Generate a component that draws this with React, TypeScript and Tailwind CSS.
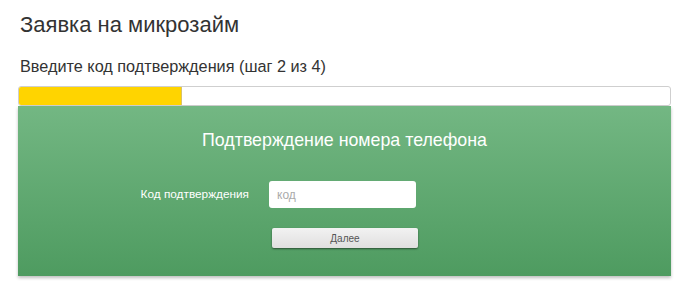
export default function App() {
  return (
    <div className="w-[700px] h-[296px] bg-white font-['Liberation_Sans',Arial,sans-serif] text-[#222]">
      <div className="pl-[18px] pt-[10px] w-[671px]">
        <h1 className="pl-[2px] text-[22px] leading-[30px] text-[#333]">Заявка на микрозайм</h1>
        <p className="pl-[2px] mt-[16px] text-[16.25px] leading-[20px] text-[#333]">
          Введите код подтверждения (шаг 2 из 4)
        </p>
        <div className="mt-[10px] h-[20px] rounded-[3px] border border-[#cfcfcf] bg-white overflow-hidden">
          <div className="h-full w-[163px] bg-[#ffd400] border-r border-[#d9c36a]" />
        </div>
        <div className="h-[170px] bg-gradient-to-b from-[#73b783] to-[#4e9b60] shadow-[0_2px_3px_rgba(0,0,0,0.25)] flex flex-col items-center">
          <h2 className="mt-[22px] text-[17.8px] leading-[24px] text-white">
            Подтверждение номера телефона
          </h2>
          <div className="mt-[29px] flex items-center w-full">
            <label className="w-[231px] text-right text-[11.8px] text-white">
              Код подтверждения
            </label>
            <input
              placeholder="код"
              className="ml-[20px] w-[147px] h-[27px] rounded-[3px] bg-white px-[8px] text-[12px] text-[#333] placeholder:text-[#aaa] outline-none"
            />
          </div>
          <div className="mt-[20px] flex w-full">
            <button className="ml-[254px] w-[146px] h-[20px] rounded-[2px] bg-gradient-to-b from-[#f2f2f2] to-[#e0dfdf] text-[10px] text-[#555] shadow-[0_1px_2px_rgba(0,0,0,0.5)]">
              Далее
            </button>
          </div>
        </div>
      </div>
    </div>
  );
}
